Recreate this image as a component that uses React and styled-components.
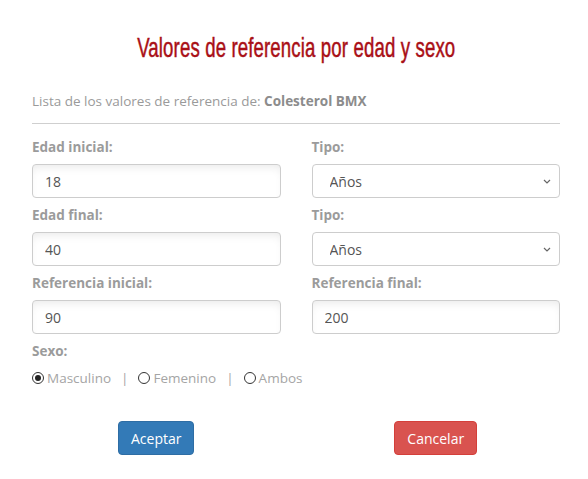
import { useState, Fragment } from 'react';
import styled, { createGlobalStyle } from 'styled-components';

const GlobalStyle = createGlobalStyle`
  * { box-sizing: border-box; }
  body {
    margin: 0;
    background: #fff;
    font-family: 'Open Sans', 'Noto Sans', sans-serif;
  }
`;

const Modal = styled.div`
  width: 588px;
  height: 479px;
  padding: 0 28px 0 32px;
`;

const Header = styled.div`
  height: 88px;
  padding-top: 31px;
  text-align: center;
`;

const Title = styled.h2`
  display: inline-block;
  margin: 0;
  font-family: 'Liberation Sans Narrow', 'Liberation Sans', sans-serif;
  font-weight: 400;
  font-size: 28px;
  line-height: 34px;
  letter-spacing: 0.2px;
  color: #a90f16;
  -webkit-text-stroke: 0.5px #a90f16;
  white-space: nowrap;
  transform: scaleX(0.665);
`;

const Subtitle = styled.p`
  margin: 0;
  padding: 3px 0 12px;
  font-size: 13.5px;
  line-height: 20px;
  color: #9a9a9a;
  border-bottom: 1px solid #cfcfcf;

  b {
    font-weight: 700;
    color: #8c8c8c;
  }
`;

const Grid = styled.div`
  display: grid;
  grid-template-columns: minmax(0, 1fr) minmax(0, 1fr);
  column-gap: 31px;
  padding-top: 13px;
`;

const Field = styled.div`
  display: flex;
  flex-direction: column;
`;

const Label = styled.label`
  font-size: 13.5px;
  font-weight: 700;
  line-height: 20px;
  color: #9b9b9b;
  margin-bottom: 7px;
`;

const Input = styled.input`
  height: 34px;
  width: 100%;
  padding: 0 12px;
  border: 1px solid #cdcdcd;
  border-radius: 4px;
  background: #fff;
  box-shadow: inset 0 6px 10px -4px rgba(0, 0, 0, 0.09);
  font-family: inherit;
  font-size: 14px;
  color: #555;
  outline: none;
  margin-bottom: 7px;
`;

const SelectBox = styled.div`
  position: relative;
  margin-bottom: 7px;

  svg {
    position: absolute;
    right: 9px;
    top: 15px;
    pointer-events: none;
  }
`;

const Select = styled.select`
  appearance: none;
  height: 34px;
  width: 100%;
  padding: 0 17px;
  border: 1px solid #cdcdcd;
  border-radius: 4px;
  background: #fff;
  font-family: inherit;
  font-size: 14px;
  color: #555;
  outline: none;
`;

const RadioRow = styled.div`
  display: flex;
  align-items: center;
  gap: 10px;
  font-size: 13.5px;
  color: #a5a5a5;
  white-space: nowrap;
  margin-top: 1px;
`;

const RadioItem = styled.label`
  display: flex;
  align-items: center;
  gap: 3px;
  cursor: pointer;
`;

const Dot = styled.span`
  width: 12px;
  height: 12px;
  border-radius: 50%;
  border: 1px solid #333;
  display: flex;
  align-items: center;
  justify-content: center;

  &::after {
    content: '';
    width: 6px;
    height: 6px;
    border-radius: 50%;
    background: ${(p) => (p.$on ? '#222' : 'transparent')};
  }
`;

const Sep = styled.span`
  color: #a5a5a5;
`;

const Actions = styled.div`
  display: grid;
  grid-template-columns: minmax(0, 1fr) minmax(0, 1fr);
  column-gap: 31px;
  justify-items: center;
  padding-top: 34px;
`;

const Button = styled.button`
  height: 34px;
  padding: 0 12px;
  border: 1px solid ${(p) => (p.$variant === 'danger' ? '#d43f3a' : '#2e6da4')};
  border-radius: 4px;
  background: ${(p) => (p.$variant === 'danger' ? '#d9534f' : '#337ab7')};
  color: #fff;
  font-family: inherit;
  font-size: 14px;
  cursor: pointer;
`;

const Chevron = () => (
  <svg width="8" height="5" viewBox="0 0 8 5" fill="none">
    <path d="M1 1l3 3 3-3" stroke="#666" strokeWidth="1.2" />
  </svg>
);

const TipoSelect = () => (
  <SelectBox>
    <Select defaultValue="anos">
      <option value="anos">Años</option>
      <option value="meses">Meses</option>
      <option value="dias">Días</option>
    </Select>
    <Chevron />
  </SelectBox>
);

const App = () => {
  const [sexo, setSexo] = useState('M');
  const opts = [
    ['M', 'Masculino'],
    ['F', 'Femenino'],
    ['A', 'Ambos'],
  ];

  return (
    <>
      <GlobalStyle />
      <Modal>
        <Header>
          <Title>Valores de referencia por edad y sexo</Title>
        </Header>
        <Subtitle>
          Lista de los valores de referencia de: <b>Colesterol BMX</b>
        </Subtitle>
        <Grid>
          <Field>
            <Label>Edad inicial:</Label>
            <Input defaultValue="18" />
          </Field>
          <Field>
            <Label>Tipo:</Label>
            <TipoSelect />
          </Field>
          <Field>
            <Label>Edad final:</Label>
            <Input defaultValue="40" />
          </Field>
          <Field>
            <Label>Tipo:</Label>
            <TipoSelect />
          </Field>
          <Field>
            <Label>Referencia inicial:</Label>
            <Input defaultValue="90" />
          </Field>
          <Field>
            <Label>Referencia final:</Label>
            <Input defaultValue="200" />
          </Field>
          <Field>
            <Label>Sexo:</Label>
            <RadioRow>
              {opts.map(([k, text], i) => (
                <Fragment key={k}>
                  {i > 0 && <Sep>|</Sep>}
                  <RadioItem onClick={() => setSexo(k)}>
                    <Dot $on={sexo === k} />
                    {text}
                  </RadioItem>
                </Fragment>
              ))}
            </RadioRow>
          </Field>
        </Grid>
        <Actions>
          <Button>Aceptar</Button>
          <Button $variant="danger">Cancelar</Button>
        </Actions>
      </Modal>
    </>
  );
};

export default App;
